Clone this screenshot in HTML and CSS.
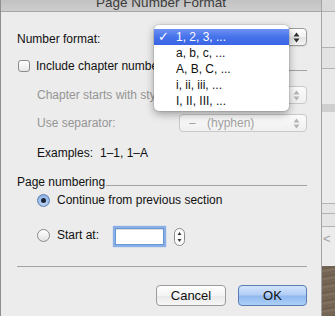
FILE: index.html
```html
<!DOCTYPE html>
<html>
<head>
<meta charset="utf-8">
<link rel="stylesheet" href="styles.css">
</head>
<body>
<div class="screen">
  <div class="dialog">
    <div class="titlebar"><span class="title">Page Number Format</span></div>
    <div class="content">
      <div class="row row-format">
        <span class="label label-format">Number format:</span>
        <div class="popup popup-format">
          <span class="popup-value"></span>
          <svg class="arrows" width="7" height="11" viewBox="0 0 7 11"><polygon points="0.5,4.5 3.5,0.5 6.5,4.5" /><polygon points="0.5,6.5 3.5,10.5 6.5,6.5" /></svg>
        </div>
      </div>
      <div class="row row-chapter">
        <span class="checkbox"></span>
        <span class="label">Include chapter number</span>
        <span class="group-line group-line-chapter"></span>
      </div>
      <div class="row row-style indent">
        <span class="label disabled">Chapter starts with style:</span>
        <div class="popup popup-style is-disabled">
          <span class="popup-value"></span>
          <svg class="arrows" width="7" height="11" viewBox="0 0 7 11"><polygon points="0.5,4.5 3.5,0.5 6.5,4.5" /><polygon points="0.5,6.5 3.5,10.5 6.5,6.5" /></svg>
        </div>
      </div>
      <div class="row row-separator indent">
        <span class="label disabled">Use separator:</span>
        <div class="popup popup-sep is-disabled">
          <span class="popup-value"><span class="dash">–</span>(hyphen)</span>
          <svg class="arrows" width="7" height="11" viewBox="0 0 7 11"><polygon points="0.5,4.5 3.5,0.5 6.5,4.5" /><polygon points="0.5,6.5 3.5,10.5 6.5,6.5" /></svg>
        </div>
      </div>
      <div class="row row-examples indent">
        <span class="label examples-key">Examples:</span>
        <span class="label">1–1, 1–A</span>
      </div>
      <div class="row row-pagenum">
        <span class="label">Page numbering</span>
        <span class="group-line group-line-page"></span>
      </div>
      <div class="row row-continue indent">
        <span class="radio radio-on"><span class="dot"></span></span>
        <span class="label">Continue from previous section</span>
      </div>
      <div class="row row-start indent">
        <span class="radio"></span>
        <span class="label label-start">Start at:</span>
        <span class="textfield"></span>
        <svg class="stepper" width="11" height="18" viewBox="0 0 11 18">
          <rect x="0.5" y="0.5" width="10" height="17" rx="5" ry="5" fill="#fbfbfb" stroke="#8a8a8a"/>
          <polygon points="3.5,7 5.5,4 7.5,7" fill="#3a3a3a"/>
          <polygon points="3.5,11 5.5,14 7.5,11" fill="#3a3a3a"/>
        </svg>
      </div>
      <div class="divider"></div>
      <div class="row row-buttons">
        <button class="btn btn-cancel">Cancel</button>
        <button class="btn btn-ok">OK</button>
      </div>
    </div>
    <div class="menu">
      <div class="menu-item selected"><span class="check">✓</span>1, 2, 3, ...</div>
      <div class="menu-item">a, b, c, ...</div>
      <div class="menu-item">A, B, C, ...</div>
      <div class="menu-item">i, ii, iii, ...</div>
      <div class="menu-item">I, II, III, ...</div>
    </div>
  </div>
  <div class="backwin">
    <div class="bw bw-top"></div>
    <div class="bw-line"></div>
    <div class="bw bw-a"></div>
    <div class="bw-line"></div>
    <div class="bw bw-b"></div>
    <div class="bw-line"></div>
    <div class="bw bw-c"></div>
    <div class="bw bw-band"></div>
    <div class="bw bw-d"></div>
    <div class="bw-line"></div>
    <div class="bw bw-e"></div>
    <div class="bw-line"></div>
    <div class="bw bw-f"></div>
    <div class="bw-line"></div>
    <div class="bw bw-g"><span class="chev">&lt;</span></div>
    <div class="bw bw-photo"></div>
  </div>
</div>
</body>
</html>
```

FILE: styles.css
```css
* { box-sizing: border-box; }
html, body { margin: 0; padding: 0; }
body {
  width: 335px;
  height: 316px;
  overflow: hidden;
  font-family: "Liberation Sans", Arial, sans-serif;
  font-size: 12px;
  color: #111;
  background: #ececec;
}
.screen { display: flex; width: 335px; height: 316px; }

.dialog {
  position: relative;
  width: 322px;
  height: 316px;
  flex: none;
  background: #ececec;
  border-left: 1px solid #8f8f8f;
  border-right: 1px solid #a4a4a4;
  display: flex;
  flex-direction: column;
}
.titlebar {
  height: 12px;
  flex: none;
  border-bottom: 1px solid #a6a6a6;
  background: linear-gradient(#c2c2c2, #cdcdcd);
  overflow: hidden;
  text-align: center;
}
.title {
  display: block;
  font-size: 13.5px;
  line-height: 16px;
  margin-top: -5px;
  color: #3b3b3b;
}

.content {
  display: flex;
  flex-direction: column;
  padding: 0 14px 0 16px;
}
.row { display: flex; align-items: center; }
.indent { padding-left: 20px; }
.label { white-space: nowrap; }
.disabled { color: #959595; }

.row-format { margin-top: 16px; height: 18px; }
.label-format { padding-top: 3px; }
.row-chapter { margin-top: 11px; height: 17px; }
.row-style { margin-top: 12px; height: 18px; }
.row-separator { margin-top: 10px; height: 18px; }
.row-examples { margin-top: 12px; height: 18px; }
.row-pagenum { margin-top: 11px; height: 18px; }
.row-continue { height: 18px; }
.row-start { margin-top: 17px; height: 21px; }
.row-buttons { margin-top: 18px; height: 21px; justify-content: flex-end; gap: 12px; }

.examples-key { width: 63px; }

.popup {
  margin-left: auto;
  height: 18px;
  border: 1px solid #9c9c9c;
  border-radius: 4px;
  background: linear-gradient(#ffffff, #f1f1f1 50%, #e4e4e4 51%, #f4f4f4);
  display: flex;
  align-items: center;
  padding: 0 6px 0 9px;
  box-shadow: 0 1px 1px rgba(0,0,0,0.08);
}
.popup-value { flex: 1; white-space: nowrap; overflow: hidden; }
.popup .arrows polygon { fill: #2e2e2e; }
.popup.is-disabled { border-color: #c9c9c9; color: #a2a2a2; background: linear-gradient(#fbfbfb, #f0f0f0); box-shadow: none; }
.popup.is-disabled .arrows polygon { fill: #b4b4b4; }
.popup-format { width: 153px; }
.popup-style { width: 128px; }
.popup-sep { width: 128px; }
.dash { display: inline-block; width: 18px; }

.checkbox {
  width: 12px;
  height: 12px;
  margin: 0 6px 0 1px;
  border: 1px solid #8c8c8c;
  border-radius: 3px;
  background: linear-gradient(#ffffff, #e6e6e6);
  flex: none;
}
.group-line { flex: 1; height: 1px; background: #a2a2a2; align-self: flex-end; }
.group-line-chapter { margin: 0 0 3px 4px; }
.group-line-page { margin: 0 0 5px 1px; }

.radio {
  width: 13px;
  height: 13px;
  border-radius: 50%;
  border: 1px solid #8a8a8a;
  background: linear-gradient(#ffffff, #e2e2e2);
  margin-right: 7px;
  flex: none;
  display: flex;
  align-items: center;
  justify-content: center;
}
.radio-on {
  border-color: #5f7fae;
  background: radial-gradient(circle at 50% 65%, #c8def8, #8fb4e8 70%, #7aa3e0);
}
.dot { width: 5px; height: 5px; border-radius: 50%; background: #1c2538; }

.row-start .radio { margin-bottom: 3px; }
.label-start { margin-bottom: 3px; margin-right: 16px; }
.textfield {
  width: 49px;
  height: 17px;
  background: #fff;
  border: 1px solid #6b96d6;
  box-shadow: 0 0 1px 2px rgba(120,165,230,0.85), inset 0 1px 1px rgba(0,0,0,0.15);
  flex: none;
}
.stepper { margin-left: 10px; flex: none; }

.divider { margin-top: 19px; height: 1px; background: #a4a4a4; }

.btn {
  height: 21px;
  border-radius: 4px;
  font-family: "Liberation Sans", Arial, sans-serif;
  font-size: 13px;
  color: #111;
  padding: 0;
  margin: 0;
}
.btn-cancel {
  width: 70px;
  border: 1px solid #9a9a9a;
  background: linear-gradient(#ffffff, #f4f4f4 50%, #e8e8e8 51%, #f6f6f6);
}
.btn-ok {
  width: 69px;
  border: 1px solid #5a7db3;
  background: linear-gradient(#d4e4fb, #b0cdf5 48%, #90b8ef 52%, #acd0f7);
}

.menu {
  position: absolute;
  left: 153px;
  top: 25px;
  width: 135px;
  height: 86px;
  background: #fff;
  border-radius: 5px;
  padding: 4px 0 2px;
  box-shadow: 0 3px 9px rgba(0,0,0,0.35), 0 0 0 1px rgba(0,0,0,0.08);
}
.menu-item {
  height: 16px;
  line-height: 16px;
  padding-left: 22px;
  position: relative;
  white-space: nowrap;
  color: #111;
}
.menu-item.selected {
  background: linear-gradient(#6e92f2, #4672ea 50%, #3a66e6);
  color: #fff;
}
.check {
  position: absolute;
  left: 4px;
  top: 0;
  font-family: "DejaVu Sans", sans-serif;
  font-size: 13px;
  font-weight: bold;
}

.backwin { width: 13px; height: 316px; display: flex; flex-direction: column; flex: none; }
.bw-line { height: 1px; background: #b3b3b3; }
.bw-top { height: 11px; background: #d9d9d9; }
.bw-a { height: 35px; background: #e8e8e8; }
.bw-b { height: 20px; background: #e3e3e3; }
.bw-c { height: 35px; background: #e9e9e9; }
.bw-band { height: 8px; background: #cfcfcf; }
.bw-d { height: 91px; background: #ececec; }
.bw-e { height: 9px; background: #e5e5e5; }
.bw-f { height: 12px; background: #e5e5e5; }
.bw-g { height: 39px; background: #ececec; position: relative; }
.chev { position: absolute; left: 1px; top: 4px; color: #a0a0a0; font-size: 13px; }
.bw-photo {
  height: 50px;
  background: repeating-linear-gradient(170deg, #7a6a59 0, #6c5c4c 3px, #857463 5px, #6f5f50 8px);
}
```
